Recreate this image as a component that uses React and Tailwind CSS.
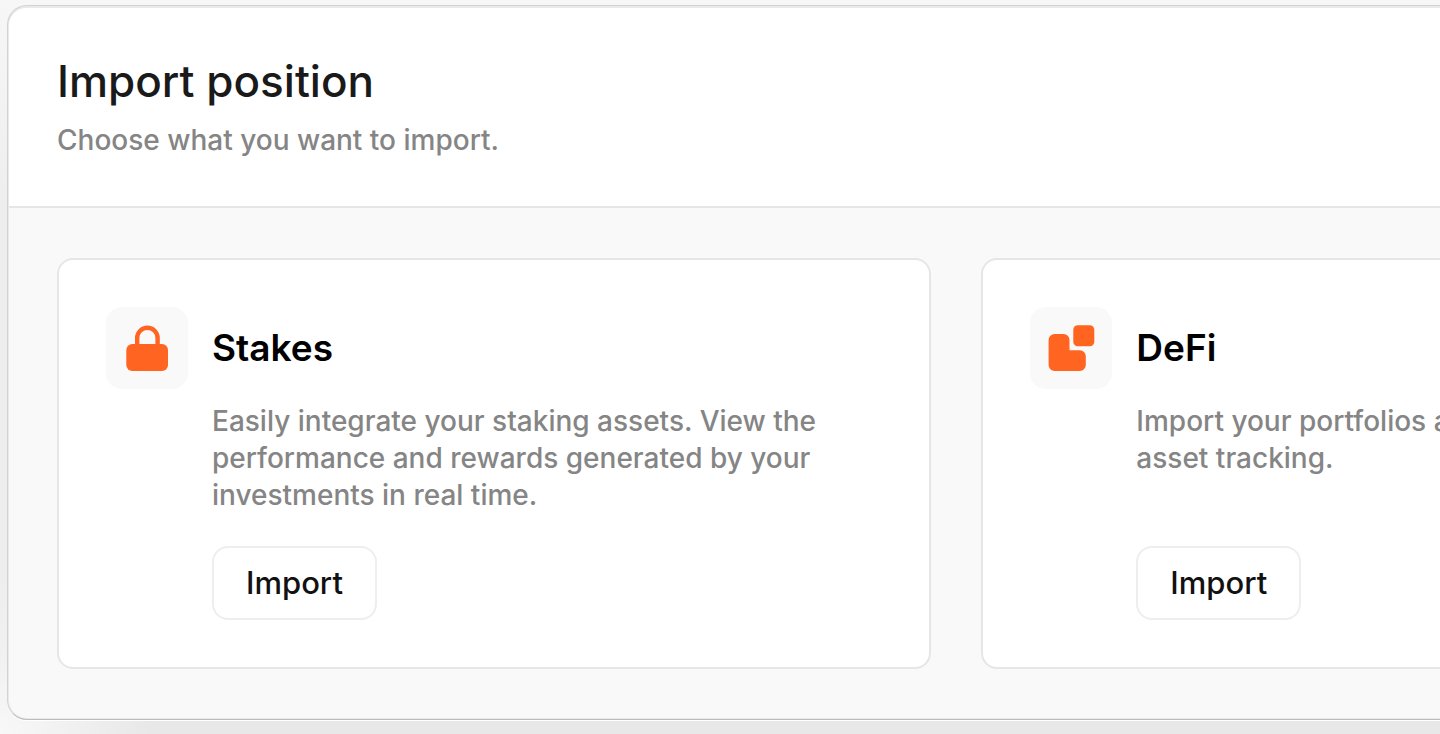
import React from 'react';

const LockIcon = () => (
  <svg width="82" height="82" viewBox="0 0 82 82" fill="none" aria-hidden="true">
    <path d="M31.2 40V31a10.2 10.2 0 0 1 20.4 0V40" stroke="#ff6420" strokeWidth="4.4" />
    <rect x="20.3" y="37" width="41.7" height="27" rx="6" fill="#ff6420" />
  </svg>
);

const BlocksIcon = () => (
  <svg width="82" height="82" viewBox="0 0 82 82" fill="none" aria-hidden="true">
    <path
      d="M24.6 27h8.9a6 6 0 0 1 6 6v10.3h10.3a6 6 0 0 1 6 6V58a6 6 0 0 1-6 6H24.6a6 6 0 0 1-6-6V33a6 6 0 0 1 6-6Z"
      fill="#ff6420"
    />
    <rect x="43.3" y="18.3" width="21" height="21" rx="4.5" fill="#ff6420" />
  </svg>
);

const sources = [
  {
    id: 'stakes',
    title: 'Stakes',
    icon: LockIcon,
    description:
      'Easily integrate your staking assets. View the performance and rewards generated by your investments in real time.',
  },
  {
    id: 'defi',
    title: 'DeFi',
    icon: BlocksIcon,
    description: 'Import your portfolios and benefit from complete asset tracking.',
  },
];

const SourceCard = ({ source }) => {
  const Icon = source.icon;

  return (
    <article className="flex gap-6 rounded-2xl border-2 border-[#e6e6e6] bg-white p-[47px]">
      <div className="h-[82px] w-[82px] shrink-0 overflow-hidden rounded-2xl bg-[#f9f9f9]">
        <Icon />
      </div>
      <div className="flex min-w-0 flex-1 flex-col items-start">
        <h2 className="flex h-[82px] items-center text-[37px] font-semibold text-black">{source.title}</h2>
        <p className="mt-[14px] mb-8 text-[28px] leading-[37px] font-medium text-[#858585]">{source.description}</p>
        <button
          type="button"
          className="mt-auto rounded-2xl border-2 border-[#eeeeee] bg-white px-8 py-4 text-[31px] leading-[38px] font-medium text-[#111111]"
        >
          Import
        </button>
      </div>
    </article>
  );
};

export default function App() {
  return (
    <div className="min-h-screen overflow-hidden bg-[radial-gradient(circle_at_0%_100%,#f8f8f8_0,#f8f8f800_150px),linear-gradient(#f7f7f7_0,#eeeeee_200px,#eeeeee_80%,#e8e8e8_98%)] pt-[5px] pb-3 pl-[7px] font-['Inter',sans-serif]">
      {/* Panel runs past the right edge of the window */}
      <main className="w-[132.5%] overflow-hidden rounded-[20px] border border-[#d2d2d2] border-b-[#bdbdbd] bg-[#e9e9e9] p-px pt-0.5 shadow-[0_1px_0_#ffffff]">
        <div className="overflow-hidden rounded-[18px] bg-[#f9f9f9]">
          <header className="border-b-2 border-[#e6e6e6] bg-white px-12 pt-[47px] pb-[47px]">
            <h1 className="text-[44px] leading-[52px] font-medium text-[#1a1a1a]">Import position</h1>
            <p className="mt-[15px] text-[28px] leading-[37px] font-medium text-[#858585]">
              Choose what you want to import.
            </p>
          </header>
          <section className="grid grid-cols-2 gap-[50px] px-12 pt-[50px] pb-[49px]">
            {sources.map((source) => (
              <SourceCard key={source.id} source={source} />
            ))}
          </section>
        </div>
      </main>
    </div>
  );
}
